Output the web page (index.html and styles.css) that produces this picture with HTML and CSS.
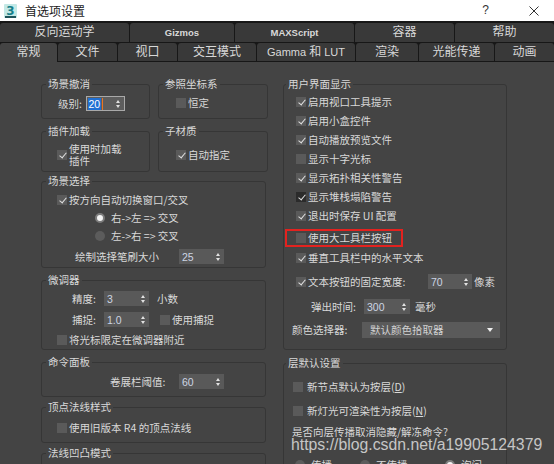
FILE: index.html
```html
<!DOCTYPE html>
<html lang="zh-CN">
<head>
<meta charset="utf-8">
<title>首选项设置</title>
<link rel="stylesheet" href="styles.css">
</head>
<body>
<div class="titlebar">
  <svg class="app-icon" width="13" height="14" viewBox="0 0 13 14"><rect x="0" y="0" width="13" height="14" rx="1" fill="#c4e9e6"/><text x="6.5" y="11" text-anchor="middle" font-family="DejaVu Sans" font-weight="bold" font-size="12" fill="#17808a">3</text><rect x="1" y="12" width="11" height="2" fill="#1f545a"/></svg>
  <span class="title">首选项设置</span>
  <span class="help">?</span>
  <svg class="close" width="10" height="10" viewBox="0 0 10 10"><path d="M0.5 0.5 L9.5 9.5 M9.5 0.5 L0.5 9.5" stroke="#333" stroke-width="1" fill="none"/></svg>
</div>

<div class="tabs">
  <div class="tabrow r1">
    <div class="tab">反向运动学</div>
    <div class="tab"><span class="bold">Gizmos</span></div>
    <div class="tab"><span class="bold">MAXScript</span></div>
    <div class="tab">容器</div>
    <div class="tab">帮助</div>
  </div>
  <div class="tabrow r2">
    <div class="tab sel">常规</div>
    <div class="tab">文件</div>
    <div class="tab">视口</div>
    <div class="tab">交互模式</div>
    <div class="tab"><span class="lat">Gamma&nbsp;</span>和<span class="lat">&nbsp;LUT</span></div>
    <div class="tab">渲染</div>
    <div class="tab">光能传递</div>
    <div class="tab">动画</div>
  </div>
</div>

<div class="content">
  <div class="col col-l">
    <div class="pair">
      <div class="group g-a w109">
        <div class="gt">场景撤消</div>
        <div class="row h15 mt5 pl16">
          <span class="lbl w28">级别:</span>
          <div class="spin focus w39"><span class="hl">20</span><span class="caret"></span><span class="arrows"><i class="up"></i><i class="dn"></i></span></div>
        </div>
      </div>
      <div class="group g-a w110">
        <div class="gt">参照坐标系</div>
        <div class="row mt5 pl17"><span class="cb"></span><span>恒定</span></div>
      </div>
    </div>

    <div class="pair mt12">
      <div class="group g-b w109">
        <div class="gt">插件加载</div>
        <div class="row two mt5 pl15"><span class="cb on"></span><span class="twoline">使用时加载<br>插件</span></div>
      </div>
      <div class="group g-b w110">
        <div class="gt">子材质</div>
        <div class="row two mt5 pl17"><span class="cb on"></span><span>自动指定</span></div>
      </div>
    </div>

    <div class="group g-c w225 mt9">
      <div class="gt">场景选择</div>
      <div class="row mt5 pl15"><span class="cb on"></span><span>按方向自动切换窗口/交叉</span></div>
      <div class="row mt4 pl53"><span class="rb on"></span><span>右-&gt;左 =&gt; 交叉</span></div>
      <div class="row mt4 pl53"><span class="rb"></span><span>左-&gt;右 =&gt; 交叉</span></div>
      <div class="row h15 mt6 pl33">
        <span class="lbl w104">绘制选择笔刷大小</span>
        <div class="spin w45"><span>25</span><span class="arrows"><i class="up"></i><i class="dn"></i></span></div>
      </div>
    </div>

    <div class="group g-d w225 mt12">
      <div class="gt">微调器</div>
      <div class="row h15 mt4 pl30">
        <span class="lbl w32">精度:</span>
        <div class="spin w45"><span>3</span><span class="arrows"><i class="up"></i><i class="dn"></i></span></div>
        <span class="ml8">小数</span>
      </div>
      <div class="row h15 mt6 pl30">
        <span class="lbl w32">捕捉:</span>
        <div class="spin w45"><span>1.0</span><span class="arrows"><i class="up"></i><i class="dn"></i></span></div>
        <span class="cb ml11"></span><span>使用捕捉</span>
      </div>
      <div class="row mt6 pl15"><span class="cb"></span><span>将光标限定在微调器附近</span></div>
    </div>

    <div class="group g-e w225 mt12">
      <div class="gt">命令面板</div>
      <div class="row h15 mt5 pl68">
        <span class="lbl w69">卷展栏阈值:</span>
        <div class="spin w45"><span>60</span><span class="arrows"><i class="up"></i><i class="dn"></i></span></div>
      </div>
    </div>

    <div class="group g-f w225 mt10">
      <div class="gt">顶点法线样式</div>
      <div class="row mt7 pl15"><span class="cb"></span><span>使用旧版本 R4 的顶点法线</span></div>
    </div>

    <div class="group g-g w225 mt10">
      <div class="gt">法线凹凸模式</div>
    </div>
  </div>

  <div class="col col-r">
    <div class="group g-ui">
      <div class="gt">用户界面显示</div>
      <div class="row mt4 pl12"><span class="cb on"></span><span>启用视口工具提示</span></div>
      <div class="row mt5 pl12"><span class="cb on"></span><span>启用小盒控件</span></div>
      <div class="row mt5 pl12"><span class="cb on"></span><span>自动播放预览文件</span></div>
      <div class="row mt5 pl12"><span class="cb"></span><span>显示十字光标</span></div>
      <div class="row mt5 pl12"><span class="cb on"></span><span>显示拓扑相关性警告</span></div>
      <div class="row mt5 pl12"><span class="cb on dark"></span><span>显示堆栈塌陷警告</span></div>
      <div class="row mt5 pl12"><span class="cb on"></span><span>退出时保存 UI 配置</span></div>
      <div class="row marked"><span class="cb"></span><span>使用大工具栏按钮</span></div>
      <div class="row mt4 pl12"><span class="cb on"></span><span>垂直工具栏中的水平文本</span></div>
      <div class="row h15 mt9 pl12">
        <span class="cb on"></span><span class="lbl w120">文本按钮的固定宽度:</span>
        <div class="spin w44"><span>70</span><span class="arrows"><i class="up"></i><i class="dn"></i></span></div>
        <span class="ml2">像素</span>
      </div>
      <div class="row h15 mt10 pl27">
        <span class="lbl w53">弹出时间:</span>
        <div class="spin w46"><span>300</span><span class="arrows"><i class="up"></i><i class="dn"></i></span></div>
        <span class="ml5">毫秒</span>
      </div>
      <div class="row h16 mt8 pl8">
        <span class="lbl w70">颜色选择器:</span>
        <div class="dd"><span>默认颜色拾取器</span><i class="tri"></i></div>
      </div>
    </div>

    <div class="group g-layer mt13">
      <div class="gt">层默认设置</div>
      <div class="row mt10 pl9"><span class="cb gap4"></span><span>新节点默认为按层(<u>D</u>)</span></div>
      <div class="row mt10 pl9"><span class="cb gap4"></span><span>新灯光可渲染性为按层(<u>N</u>)</span></div>
      <div class="row mt7 pl8"><span>是否向层传播取消隐藏/解冻命令?</span></div>
      <div class="row mt19 pl11 radios">
        <span class="ropt w65"><span class="rb"></span><span>传播</span></span>
        <span class="ropt w85"><span class="rb"></span><span>不传播</span></span>
        <span class="ropt"><span class="rb on"></span><span>询问</span></span>
      </div>
    </div>
  </div>

  <div class="watermark">https://blog.csdn.net/a19905124379</div>
</div>
</body>
</html>
```

FILE: styles.css
```css
* { box-sizing: border-box; }

html, body {
  margin: 0;
  padding: 0;
}

body {
  width: 554px;
  height: 464px;
  overflow: hidden;
  background: #444444;
  color: #d9d9d9;
  font-family: "Noto Sans CJK SC", "Liberation Sans", sans-serif;
  font-size: 10.5px;
  line-height: 14px;
}

/* ---------- title bar ---------- */
.titlebar {
  height: 21px;
  background: #ffffff;
  display: flex;
  align-items: center;
  padding-left: 4px;
  color: #1a1a1a;
  font-size: 12px;
}
.app-icon { flex: none; margin-right: 8px; }
.title { line-height: 21px; }
.help {
  margin-left: auto;
  font-family: "Liberation Sans", sans-serif;
  font-size: 12px;
  color: #333;
  line-height: 21px;
}
.close { flex: none; margin-left: 40px; margin-right: 15px; }

/* ---------- tabs ---------- */
.tabs {
  background: #171717;
  padding-top: 2px;
  display: flex;
  flex-direction: column;
  gap: 1px;
}
.tabrow {
  display: grid;
  gap: 1px;
  height: 19px;
}
.r1 { grid-template-columns: 129px 104px 119px 99px 99px; }
.r2 { grid-template-columns: 57px 59px 59px 78px 98px 62px 75px 59px; }
.tab {
  background: #393939;
  color: #d8d8d8;
  font-family: "Liberation Sans", "Noto Sans CJK SC", sans-serif;
  font-size: 12px;
  line-height: 19px;
  display: flex;
  align-items: center;
  justify-content: center;
  border-radius: 3px 3px 0 0;
  white-space: nowrap;
}
.r2 .tab { box-shadow: inset 0 -1px 0 #171717; }
.r2 .tab.sel { background: #444444; box-shadow: none; }
.tab .bold { font-weight: bold; font-size: 9.5px; }
.tab .lat { font-size: 11px; }

/* ---------- content ---------- */
.content {
  position: relative;
  height: 402px;
  display: flex;
  gap: 15px;
  padding: 22px 0 0 41px;
  overflow: hidden;
}
.col { display: flex; flex-direction: column; flex: none; }
.col-l { width: 227px; }
.col-r { width: 224px; }

.pair { display: flex; gap: 8px; }

.group {
  border: 1px solid #363636;
  border-radius: 3px;
  flex: none;
}
.gt {
  width: fit-content;
  height: 14px;
  line-height: 14px;
  margin: -8px 0 0 4px;
  padding: 0 2px;
  background: #444444;
  white-space: nowrap;
}
.col-r .gt { margin-left: 2px; }

.w109 { width: 109px; }
.w110 { width: 110px; }
.w225 { width: 225px; }

.g-a { height: 35px; }
.g-b { height: 41px; }
.g-c { height: 87px; }
.g-d { height: 70px; }
.g-e { height: 35px; }
.g-f { height: 36px; }
.g-g { height: 40px; }
.g-ui { height: 266px; }
.g-layer { height: 130px; }

/* rows */
.row {
  display: flex;
  align-items: center;
  height: 14px;
  white-space: nowrap;
}
.row.h15 { height: 15px; }
.row.h16 { height: 16px; }
.row.two { height: 24px; }
.twoline { line-height: 12px; }

.mt4 { margin-top: 4px; }
.mt5 { margin-top: 5px; }
.mt6 { margin-top: 6px; }
.mt7 { margin-top: 7px; }
.mt8 { margin-top: 8px; }
.mt9 { margin-top: 9px; }
.mt10 { margin-top: 10px; }
.mt12 { margin-top: 12px; }
.mt13 { margin-top: 13px; }
.mt19 { margin-top: 19px; }

.pl8 { padding-left: 8px; }
.pl9 { padding-left: 9px; }
.pl11 { padding-left: 11px; }
.pl12 { padding-left: 12px; }
.pl15 { padding-left: 15px; }
.pl16 { padding-left: 16px; }
.pl17 { padding-left: 17px; }
.pl27 { padding-left: 27px; }
.pl30 { padding-left: 30px; }
.pl33 { padding-left: 33px; }
.pl53 { padding-left: 53px; }
.pl68 { padding-left: 68px; }

.ml2 { margin-left: 2px; }
.ml5 { margin-left: 5px; }
.ml8 { margin-left: 8px; }
.ml11 { margin-left: 11px; }

.lbl { flex: none; }
.w28 { width: 28px; }
.w32 { width: 32px; }
.w53 { width: 53px; }
.w69 { width: 69px; }
.w70 { width: 70px; }
.w104 { width: 104px; }
.w120 { width: 120px; }

/* checkbox */
.cb {
  flex: none;
  width: 10px;
  height: 10px;
  background: #5a5a5a;
  margin-right: 2px;
}
.cb.gap4 { margin-right: 4px; }
.cb.dark { background: #2b2b2b; }
.cb.on::after {
  content: "";
  display: block;
  width: 3px;
  height: 6px;
  margin: 1px 0 0 3.5px;
  border: solid #e2e2e2;
  border-width: 0 1.7px 1.7px 0;
  transform: rotate(40deg);
}

/* radio */
.rb {
  flex: none;
  width: 10px;
  height: 10px;
  border-radius: 50%;
  background: #5c5c5c;
  margin-right: 6px;
}
.rb.on {
  background: #f4f4f4;
  border: 2px solid #7c7c7c;
}
.ropt { display: flex; align-items: center; flex: none; }
.w65 { width: 65px; }
.w85 { width: 85px; }

/* spinner */
.spin {
  flex: none;
  display: flex;
  align-items: center;
  height: 15px;
  background: #595959;
  padding-left: 3px;
  font-family: "Liberation Sans", sans-serif;
  font-size: 10.5px;
  color: #cdd5e4;
}
.w39 { width: 39px; }
.w44 { width: 44px; }
.w45 { width: 45px; }
.w46 { width: 46px; }
.spin.focus {
  border: 1px solid #a9a9a9;
  background: #5d5d5d;
  padding-left: 1px;
}
.spin .hl {
  background: #1f6fd3;
  color: #ffffff;
  line-height: 12px;
  padding: 0 0.5px;
}
.spin .caret {
  width: 1px;
  height: 12px;
  background: #ea7424;
  margin-left: 1px;
}
.arrows {
  margin-left: auto;
  margin-right: 4px;
  display: flex;
  flex-direction: column;
  gap: 2px;
}
.arrows i {
  display: block;
  width: 0;
  height: 0;
  border-left: 2px solid transparent;
  border-right: 2px solid transparent;
}
.arrows .up { border-bottom: 3px solid #e2e2e2; }
.arrows .dn { border-top: 3px solid #e2e2e2; }

/* dropdown */
.dd {
  flex: none;
  width: 138px;
  height: 16px;
  background: #5a5a5a;
  display: flex;
  align-items: center;
  padding: 0 7px 0 8px;
  color: #d2d2d2;
}
.dd .tri {
  margin-left: auto;
  width: 0;
  height: 0;
  border-left: 3px solid transparent;
  border-right: 3px solid transparent;
  border-top: 4px solid #efefef;
}

/* highlighted row */
.row.marked {
  margin-top: 6px;
  margin-left: 1px;
  width: 118px;
  height: 18px;
  border: 2px solid #e3221f;
  padding-left: 9px;
}

u { text-decoration: underline; }

/* watermark overlay */
.watermark {
  position: absolute;
  left: 291px;
  top: 375px;
  font-family: "Liberation Sans", sans-serif;
  font-size: 15.8px;
  line-height: 16px;
  color: #c6c6c6;
  white-space: nowrap;
  pointer-events: none;
}
```
